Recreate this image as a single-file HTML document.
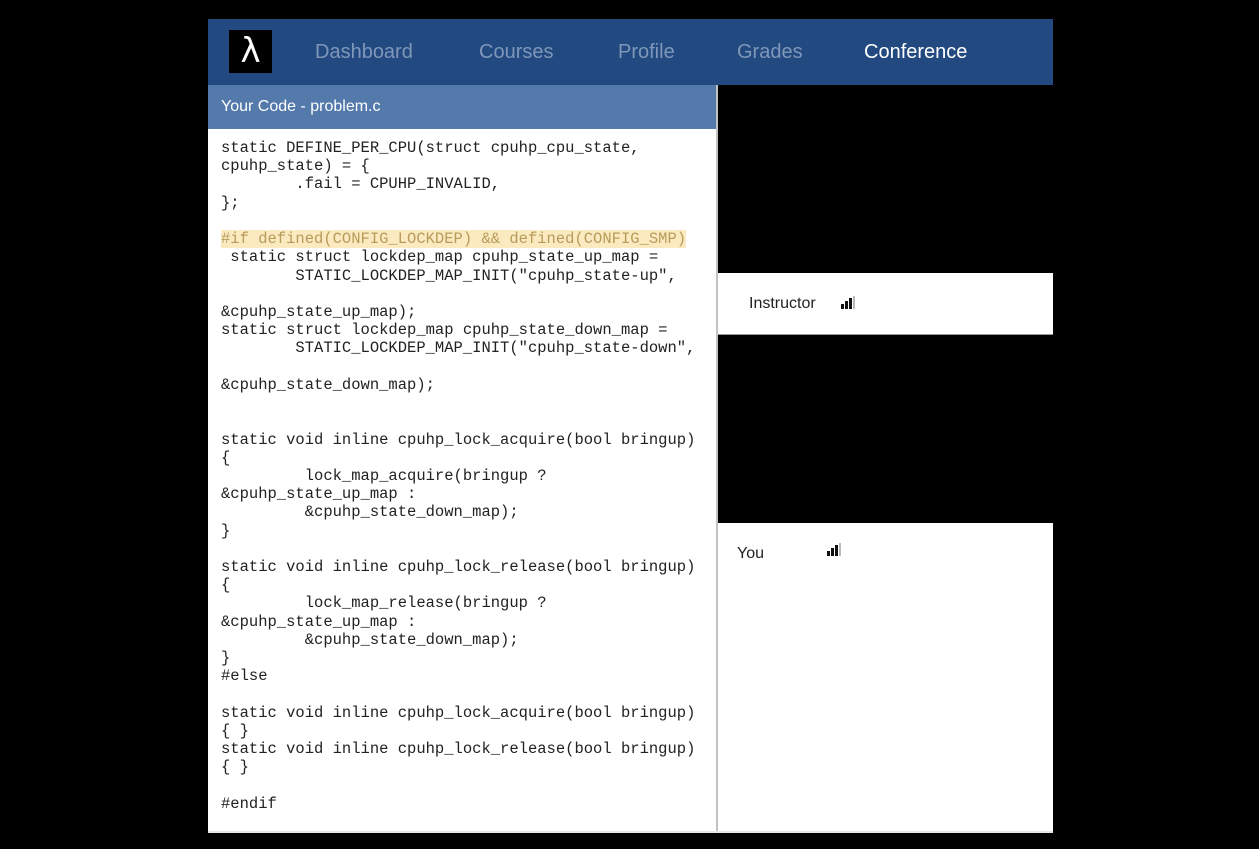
<!DOCTYPE html>
<html><head><meta charset="utf-8"><style>
*{margin:0;padding:0;box-sizing:border-box}
body{width:1259px;height:849px;background:#000;position:relative;overflow:hidden;font-family:"Liberation Sans",sans-serif}
.nav{position:absolute;left:208px;top:19px;width:845px;height:66px;background:#224a80}
.logo{position:absolute;left:21px;top:11px;width:43px;height:43px;background:#000;color:#fff;font-size:34px;text-align:center;line-height:42px;font-family:"DejaVu Sans",sans-serif}
.nav span{position:absolute;top:22px;font-size:20px;color:#7f97b9}
.hdr{position:absolute;left:208px;top:85px;width:508px;height:44px;background:#5479ab;color:#fff;font-size:16px;padding:13px 0 0 13px}
.code{position:absolute;left:208px;top:129px;width:508px;height:703px;background:#fff}
pre{position:absolute;left:13px;top:10px;font-family:"Liberation Mono",monospace;font-size:15.5px;line-height:18.22px;color:#222}
.hl{background:#fbeac0;color:#b79b5a}
.div{position:absolute;left:716px;top:85px;width:2px;height:747px;background:#c2c2c2}
.right{position:absolute;left:718px;top:85px;width:335px;height:747px;background:#fff}
.vid{position:absolute;left:0;width:335px;background:#000}
.lbl{position:absolute;font-size:16px;color:#222}
.sig{position:absolute;width:16px;height:13px}
.bot{position:absolute;left:208px;top:831px;width:845px;height:2px;background:#e4e4e4}
</style></head><body>
<div class="nav"><div class="logo">λ</div>
<span style="left:107px">Dashboard</span><span style="left:271px">Courses</span><span style="left:410px">Profile</span><span style="left:529px">Grades</span><span style="left:656px;color:#fff">Conference</span></div>
<div class="hdr">Your Code - problem.c</div>
<div class="code"><pre>static DEFINE_PER_CPU(struct cpuhp_cpu_state,
cpuhp_state) = {
        .fail = CPUHP_INVALID,
};

<span class="hl">#if defined(CONFIG_LOCKDEP) &amp;&amp; defined(CONFIG_SMP)</span>
 static struct lockdep_map cpuhp_state_up_map =
        STATIC_LOCKDEP_MAP_INIT("cpuhp_state-up",

&amp;cpuhp_state_up_map);
static struct lockdep_map cpuhp_state_down_map =
        STATIC_LOCKDEP_MAP_INIT("cpuhp_state-down",

&amp;cpuhp_state_down_map);


static void inline cpuhp_lock_acquire(bool bringup)
{
         lock_map_acquire(bringup ?
&amp;cpuhp_state_up_map :
         &amp;cpuhp_state_down_map);
}

static void inline cpuhp_lock_release(bool bringup)
{
         lock_map_release(bringup ?
&amp;cpuhp_state_up_map :
         &amp;cpuhp_state_down_map);
}
#else

static void inline cpuhp_lock_acquire(bool bringup)
{ }
static void inline cpuhp_lock_release(bool bringup)
{ }

#endif</pre></div>
<div class="div"></div>
<div class="right">
<div class="vid" style="top:0;height:188px"></div>
<div class="lbl" style="left:31px;top:210px">Instructor</div>
<svg class="sig" style="left:123px;top:211px" viewBox="0 0 16 13"><rect x="0" y="8" width="3" height="5" fill="#111"/><rect x="4" y="5" width="3" height="8" fill="#111"/><rect x="8" y="2" width="3" height="11" fill="#111"/><rect x="12" y="0" width="2" height="13" fill="#bbb"/></svg>
<div style="position:absolute;left:0;top:249px;width:335px;height:1px;background:#999"></div>
<div class="vid" style="top:250px;height:188px"></div>
<div class="lbl" style="left:19px;top:460px">You</div>
<svg class="sig" style="left:109px;top:458px" viewBox="0 0 16 13"><rect x="0" y="8" width="3" height="5" fill="#111"/><rect x="4" y="5" width="3" height="8" fill="#111"/><rect x="8" y="2" width="3" height="11" fill="#111"/><rect x="12" y="0" width="2" height="13" fill="#bbb"/></svg>
</div>
<div class="bot"></div>
</body></html>
